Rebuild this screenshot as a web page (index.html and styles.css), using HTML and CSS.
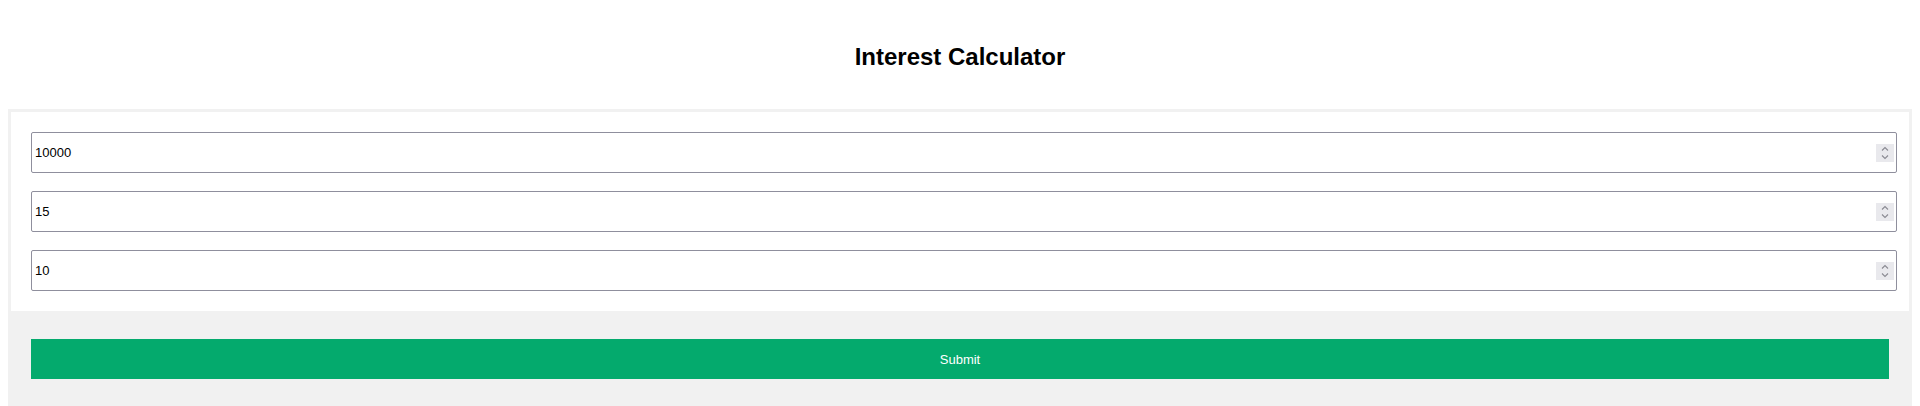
FILE: index.html
```html
<!DOCTYPE html>
<html lang="en">
<head>
<meta charset="utf-8">
<title>Interest Calculator</title>
<link rel="stylesheet" href="styles.css">
</head>
<body>
<div class="page">
  <h2 class="title">Interest Calculator</h2>
  <form class="card">
    <div class="fields">
      <div class="field">
        <input class="num" type="text" value="10000">
        <span class="spin"><svg width="18" height="18" viewBox="0 0 18 18"><path d="M6 6.5 L9 3.5 L12 6.5 M6 11.5 L9 14.5 L12 11.5" fill="none" stroke="#8a8a92" stroke-width="1.1"/></svg></span>
      </div>
      <div class="field">
        <input class="num" type="text" value="15">
        <span class="spin"><svg width="18" height="18" viewBox="0 0 18 18"><path d="M6 6.5 L9 3.5 L12 6.5 M6 11.5 L9 14.5 L12 11.5" fill="none" stroke="#8a8a92" stroke-width="1.1"/></svg></span>
      </div>
      <div class="field">
        <input class="num" type="text" value="10">
        <span class="spin"><svg width="18" height="18" viewBox="0 0 18 18"><path d="M6 6.5 L9 3.5 L12 6.5 M6 11.5 L9 14.5 L12 11.5" fill="none" stroke="#8a8a92" stroke-width="1.1"/></svg></span>
      </div>
    </div>
    <div class="footer">
      <button type="button" class="submit">Submit</button>
    </div>
  </form>
</div>
</body>
</html>
```
FILE: styles.css
```css
html, body {
  margin: 0;
  padding: 0;
  background: #ffffff;
}
.page {
  padding: 43px 8px 0;
  font-family: "Liberation Sans", Arial, sans-serif;
}
.title {
  margin: 0 0 38px;
  font-size: 24px;
  line-height: 28px;
  font-weight: bold;
  text-align: center;
  color: #000;
}
.card {
  background: #f1f1f1;
  padding: 3px 3px 0;
  margin: 0;
}
.fields {
  background: #ffffff;
  padding: 20px 20px 20px;
  display: flex;
  flex-direction: column;
  gap: 18px;
}
.field {
  display: flex;
  align-items: center;
  height: 41px;
  box-sizing: border-box;
  margin-right: -8px;
  border: 1px solid #8f8f9d;
  border-radius: 2px;
  background: #fff;
  padding: 0 2px 0 3px;
}
.num {
  flex: 1;
  border: none;
  outline: none;
  padding: 0;
  margin: 0;
  font-family: "Liberation Sans", Arial, sans-serif;
  font-size: 13px;
  color: #000;
  background: transparent;
}
.spin {
  display: flex;
  width: 18px;
  height: 18px;
  background: #e9e9ed;
}
.footer {
  padding: 28px 20px 28px;
}
.submit {
  display: block;
  width: 100%;
  height: 40px;
  border: none;
  background: #04aa6d;
  color: #ffffff;
  font-family: "Liberation Sans", Arial, sans-serif;
  font-size: 13px;
  padding: 0;
}
```
